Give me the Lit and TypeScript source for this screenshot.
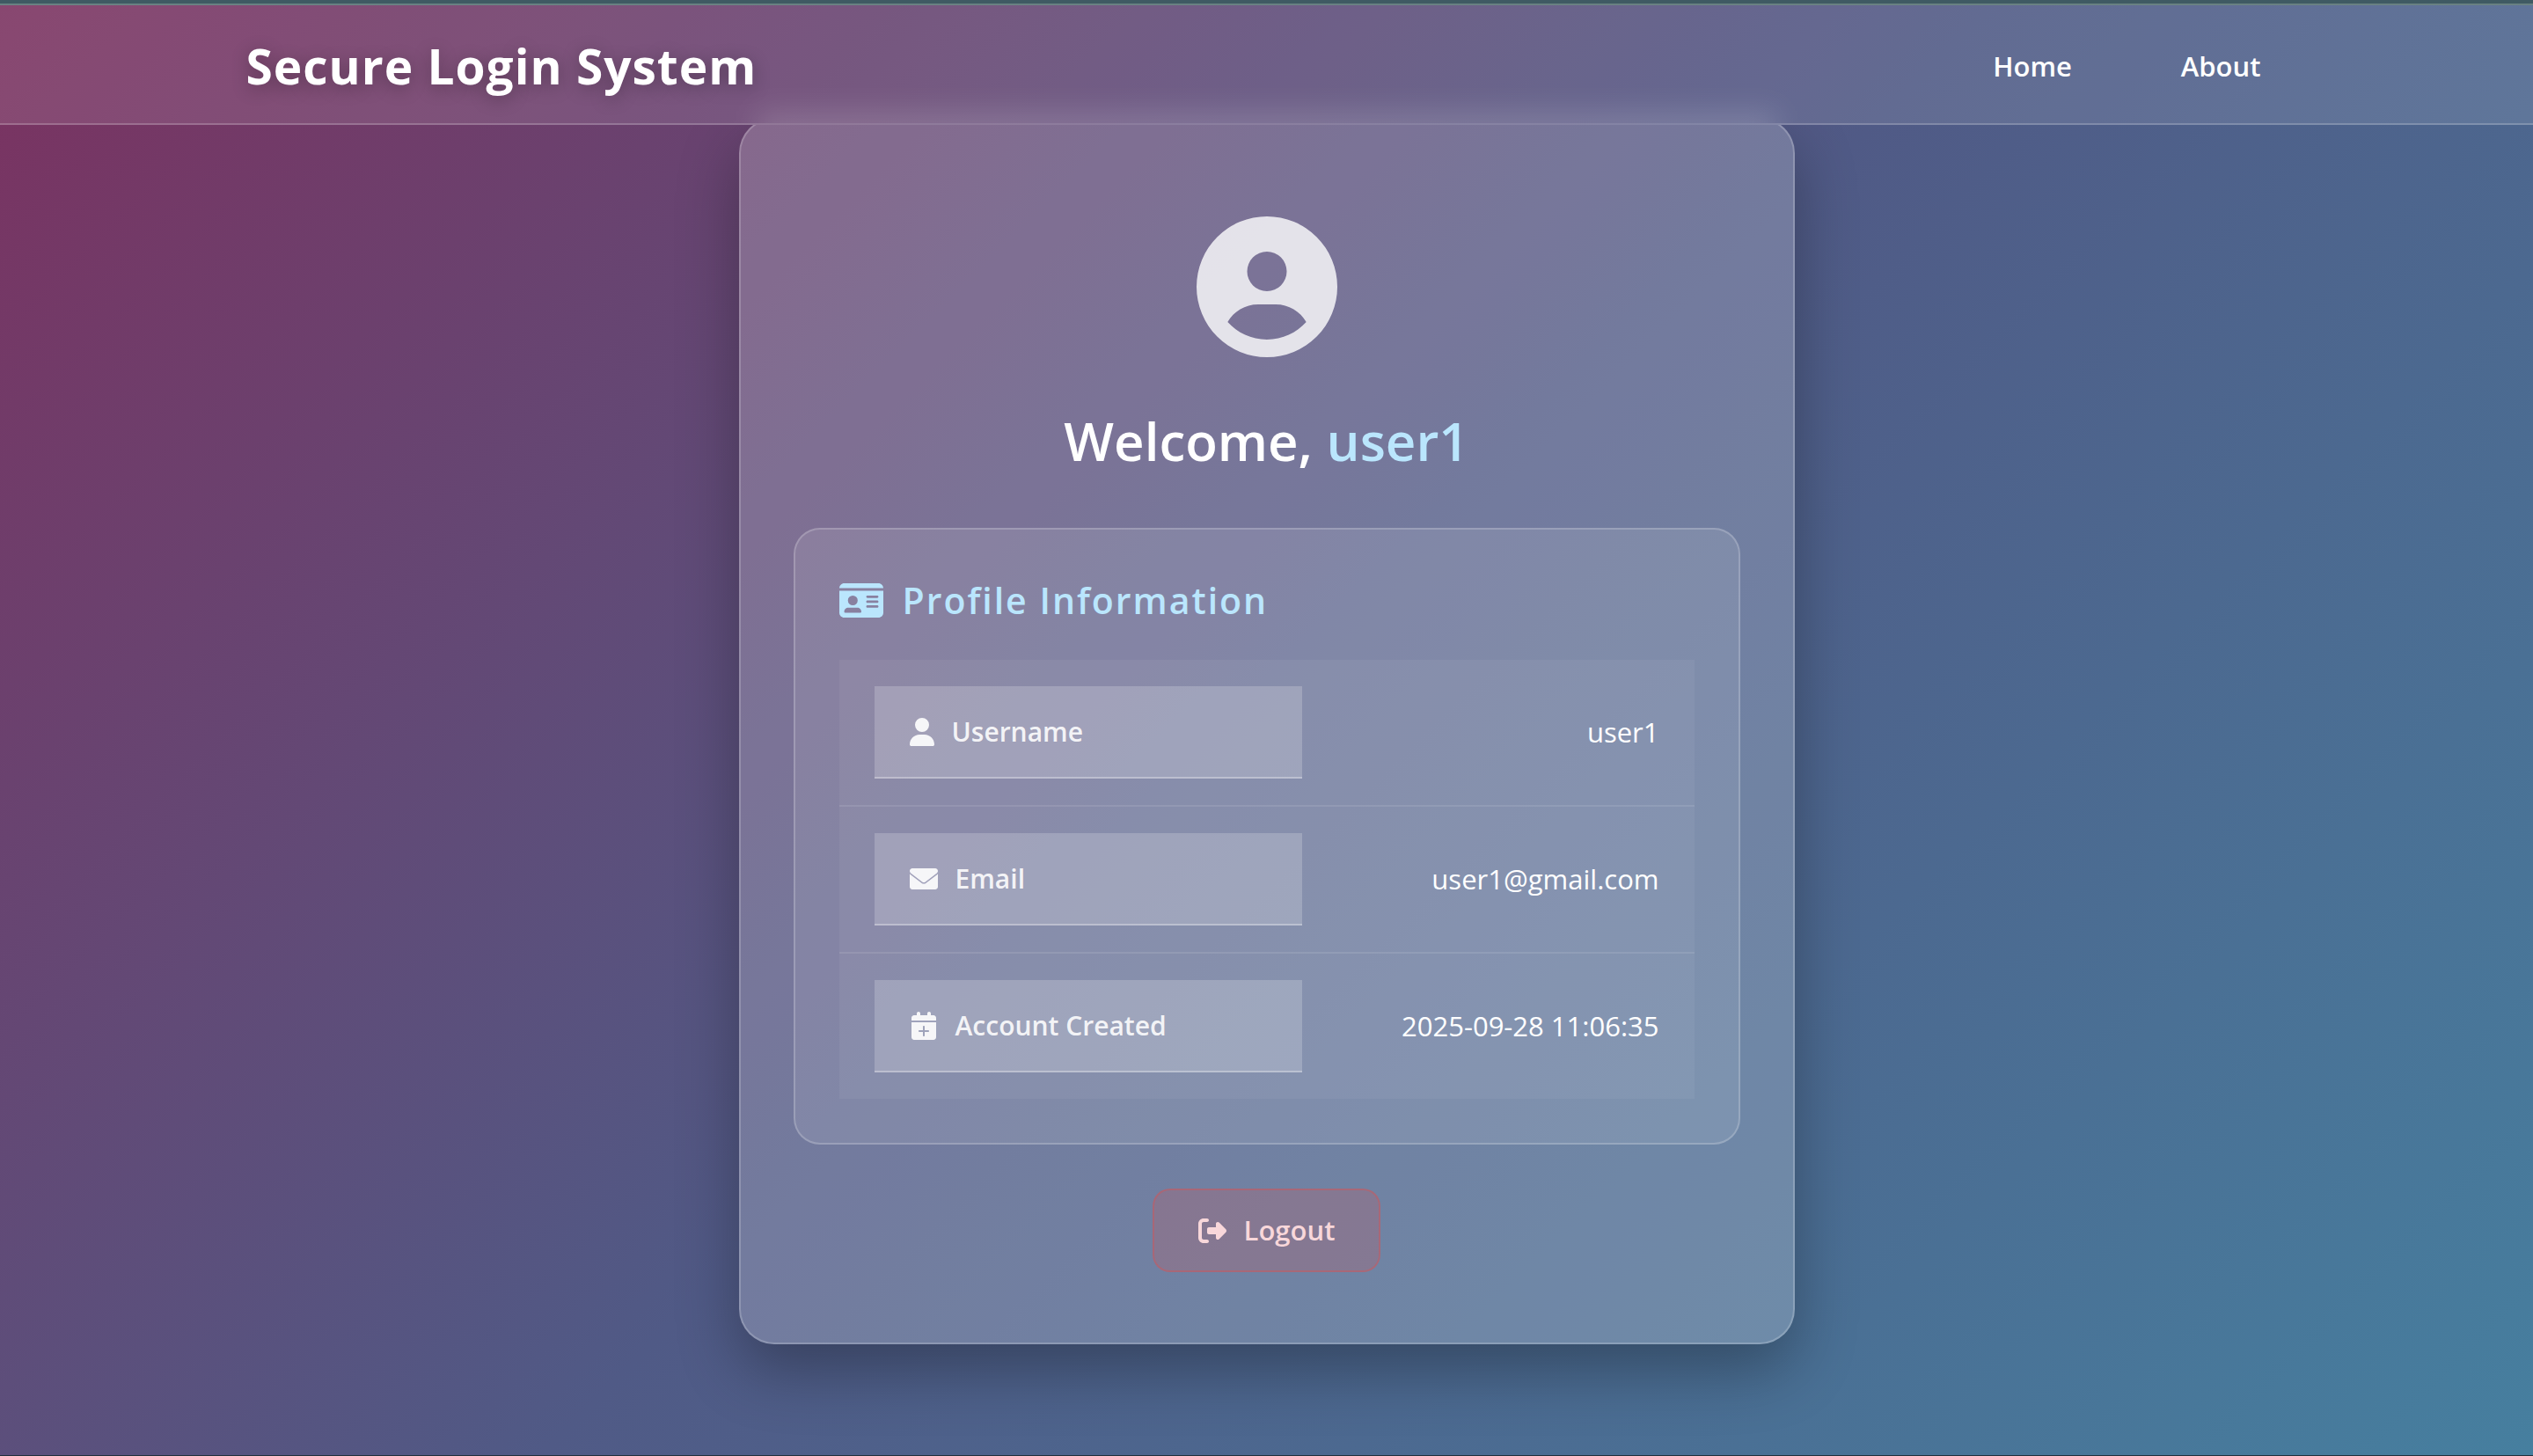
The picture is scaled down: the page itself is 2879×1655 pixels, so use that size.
import { LitElement, html, css, svg } from "lit";
import { customElement } from "lit/decorators.js";

const icons = {
  account: {
    box: "0 0 512 512",
    d: "M399 384.2C376.9 345.8 335.4 320 288 320l-64 0c-47.4 0-88.9 25.8-111 64.2c35.2 39.2 86.2 63.8 143 63.8s107.8-24.7 143-63.8zM0 256a256 256 0 1 1 512 0A256 256 0 1 1 0 256zm256 16a72 72 0 1 0 0-144 72 72 0 1 0 0 144z",
  },
  idCard: {
    box: "0 0 576 512",
    d: "M0 96l576 0c0-35.3-28.7-64-64-64L64 32C28.7 32 0 60.7 0 96zm0 32L0 416c0 35.3 28.7 64 64 64l448 0c35.3 0 64-28.7 64-64l0-288L0 128zM64 405.3c0-29.5 23.9-53.3 53.3-53.3l117.3 0c29.5 0 53.3 23.9 53.3 53.3c0 5.9-4.8 10.7-10.7 10.7L74.7 416c-5.9 0-10.7-4.8-10.7-10.7zM176 192a64 64 0 1 1 0 128 64 64 0 1 1 0-128zm176 16c0-8.8 7.2-16 16-16l128 0c8.8 0 16 7.2 16 16s-7.2 16-16 16l-128 0c-8.8 0-16-7.2-16-16zm0 64c0-8.8 7.2-16 16-16l128 0c8.8 0 16 7.2 16 16s-7.2 16-16 16l-128 0c-8.8 0-16-7.2-16-16zm0 64c0-8.8 7.2-16 16-16l128 0c8.8 0 16 7.2 16 16s-7.2 16-16 16l-128 0c-8.8 0-16-7.2-16-16z",
  },
  user: {
    box: "0 0 448 512",
    d: "M224 256A128 128 0 1 0 224 0a128 128 0 1 0 0 256zm-45.7 48C79.8 304 0 383.8 0 482.3C0 498.7 13.3 512 29.7 512H418.3c16.4 0 29.7-13.3 29.7-29.7C448 383.8 368.2 304 269.7 304H178.3z",
  },
  envelope: {
    box: "0 0 512 512",
    d: "M48 64C21.5 64 0 85.5 0 112c0 15.1 7.1 29.3 19.2 38.4L228 311c16.6 12.6 39.4 12.6 56 0L492.8 150.4c12.1-9.1 19.2-23.3 19.2-38.4c0-26.5-21.5-48-48-48H48zM0 164V400c0 26.5 21.5 48 48 48H464c26.5 0 48-21.5 48-48V164c-3 4-6 8-10 11L296 331c-23.7 18-56.3 18-80 0L10 175c-4-3-7-7-10-11z",
  },
  calendar: {
    box: "-32 0 512 512",
    d: "M96 32V64H48C21.5 64 0 85.5 0 112v48H448V112c0-26.5-21.5-48-48-48H352V32c0-17.7-14.3-32-32-32s-32 14.3-32 32V64H160V32c0-17.7-14.3-32-32-32S96 14.3 96 32zM448 192H0V464c0 26.5 21.5 48 48 48H400c26.5 0 48-21.5 48-48V192zM224 256c9 0 16 7 16 16v64h64c9 0 16 7 16 16s-7 16-16 16H240v64c0 9-7 16-16 16s-16-7-16-16V368H144c-9 0-16-7-16-16s7-16 16-16h64V272c0-9 7-16 16-16z",
  },
  logout: {
    box: "0 0 512 512",
    d: "M377.9 105.9L500.7 228.7c7.2 7.2 11.3 17.1 11.3 27.3s-4.1 20.1-11.3 27.3L377.9 406.1c-6.4 6.4-15 9.9-24 9.9c-18.7 0-33.9-15.2-33.9-33.9l0-62.1-128 0c-17.7 0-32-14.3-32-32l0-64c0-17.7 14.3-32 32-32l128 0 0-62.1c0-18.7 15.2-33.9 33.9-33.9c9 0 17.6 3.6 24 9.9zM160 96L96 96c-17.7 0-32 14.3-32 32l0 256c0 17.7 14.3 32 32 32l64 0c17.7 0 32 14.3 32 32s-14.3 32-32 32l-64 0c-53 0-96-43-96-96L0 128C0 75 43 32 96 32l64 0c17.7 0 32 14.3 32 32s-14.3 32-32 32z",
  },
};

type IconName = keyof typeof icons;

const icon = (name: IconName) => html`
  <svg class="icon icon-${name}" viewBox=${icons[name].box} aria-hidden="true">
    ${svg`<path d=${icons[name].d}></path>`}
  </svg>
`;

const fields: { icon: IconName; label: string; value: string }[] = [
  { icon: "user", label: "Username", value: "user1" },
  { icon: "envelope", label: "Email", value: "user1@gmail.com" },
  { icon: "calendar", label: "Account Created", value: "2025-09-28 11:06:35" },
];

@customElement("app-root")
export class AppRoot extends LitElement {
  static styles = css`
    :host {
      --backdrop: linear-gradient(135deg, #7b3260 0%, #505a86 50%, #467f9f 100%);
      display: block;
      color: #fff;
      font-family: "Segoe UI", "Open Sans", "Noto Sans", sans-serif;
      font-size: 31px;
      line-height: 43px;
    }
    * {
      box-sizing: border-box;
    }
    .page {
      display: flex;
      flex-direction: column;
      min-height: 100vh;
      border-bottom: 1px solid #22303c;
      background: var(--backdrop) fixed;
    }
    .topline {
      height: 6px;
      background: #3f5a63;
      border-bottom: 2px solid #698182;
    }
    .header {
      position: relative;
      z-index: 1;
      overflow: hidden;
      border-bottom: 2px solid rgba(255, 255, 255, 0.2);
      background:
        linear-gradient(rgba(255, 255, 255, 0.1), rgba(255, 255, 255, 0.1)),
        var(--backdrop) fixed;
    }
    /* Soft glow where the card slides under the frosted header */
    .header::before {
      content: "";
      position: absolute;
      bottom: -60px;
      left: calc(50% - 580px);
      width: 1160px;
      height: 74px;
      background: rgba(255, 255, 255, 0.14);
      filter: blur(16px);
    }
    .bar {
      position: relative;
      display: flex;
      align-items: center;
      justify-content: space-between;
      max-width: 2400px;
      min-height: 134px;
      margin: 0 auto;
      padding: 4px 40px 0;
    }
    .brand {
      margin: 0;
      font-size: 55px;
      line-height: 76px;
      font-weight: 700;
      letter-spacing: 1px;
      text-shadow: 0 4px 20px rgba(0, 0, 0, 0.3);
    }
    .nav {
      display: flex;
      gap: 64px;
    }
    .nav-link {
      padding: 16px 30px;
      color: inherit;
      font-weight: 600;
      text-decoration: none;
    }
    .main {
      display: flex;
      flex: 1;
      align-items: center;
      justify-content: center;
      margin-top: -142px;
      padding-top: 8px;
    }
    .card {
      display: flex;
      flex-direction: column;
      align-items: center;
      width: 1200px;
      max-width: 100%;
      padding: 110px 60px 80px;
      border: 2px solid rgba(255, 255, 255, 0.2);
      border-radius: 40px;
      background: rgba(255, 255, 255, 0.2);
      box-shadow: 0 30px 70px rgba(0, 0, 0, 0.3);
    }
    .icon {
      display: block;
      flex: none;
      width: 32px;
      height: 32px;
      fill: currentColor;
    }
    .icon-account {
      width: 160px;
      height: 160px;
      opacity: 0.8;
    }
    .icon-idCard {
      width: 50px;
      height: 45px;
    }
    .icon-user {
      width: 28px;
    }
    .welcome {
      margin: 52px 0 56px;
      font-size: 60px;
      line-height: 86px;
      font-weight: 600;
    }
    .name {
      color: #bae6fd;
    }
    .panel {
      align-self: stretch;
      padding: 50px;
      border: 2px solid rgba(255, 255, 255, 0.2);
      border-radius: 30px;
      background: rgba(255, 255, 255, 0.1);
    }
    .panel-title {
      display: flex;
      align-items: center;
      gap: 22px;
      margin: 0 0 38px;
      color: #bae6fd;
      font-size: 41px;
      line-height: 60px;
      font-weight: 600;
      letter-spacing: 2px;
    }
    .fields {
      display: block;
      width: 100%;
      background: rgba(255, 255, 255, 0.05);
    }
    .rows {
      display: block;
    }
    .row {
      display: grid;
      grid-template-columns: calc(50% + 40px) 1fr;
      align-items: center;
      padding: 30px 40px;
      border-bottom: 2px solid rgba(255, 255, 255, 0.1);
    }
    .row:last-child {
      border-bottom: 0;
    }
    .label {
      display: flex;
      align-items: center;
      gap: 20px;
      padding: 30px 40px;
      border-bottom: 2px solid rgba(255, 255, 255, 0.3);
      background: rgba(255, 255, 255, 0.2);
      color: rgba(255, 255, 255, 0.9);
      font-size: 30px;
      font-weight: 600;
      text-align: left;
    }
    .value {
      padding: 0;
      text-align: right;
    }
    .logout {
      display: flex;
      align-items: center;
      gap: 20px;
      margin-top: 50px;
      padding: 24px 50px;
      border: 2px solid rgba(220, 80, 80, 0.4);
      border-radius: 20px;
      background: rgba(220, 80, 80, 0.2);
      color: #f8d7da;
      font: inherit;
      font-weight: 600;
    }
  `;

  render() {
    return html`
      <div class="page">
        <div class="topline"></div>
        <header class="header">
          <div class="bar">
            <h1 class="brand">Secure Login System</h1>
            <nav class="nav">
              <a class="nav-link" href="#home">Home</a>
              <a class="nav-link" href="#about">About</a>
            </nav>
          </div>
        </header>
        <main class="main">
          <section class="card">
            ${icon("account")}
            <h2 class="welcome">Welcome, <span class="name">user1</span></h2>
            <section class="panel">
              <h3 class="panel-title">${icon("idCard")}<span>Profile Information</span></h3>
              <table class="fields">
                <tbody class="rows">
                  ${fields.map(
                    (field) => html`
                      <tr class="row">
                        <th class="label" scope="row">${icon(field.icon)}<span>${field.label}</span></th>
                        <td class="value">${field.value}</td>
                      </tr>
                    `
                  )}
                </tbody>
              </table>
            </section>
            <button class="logout" type="button">${icon("logout")}<span>Logout</span></button>
          </section>
        </main>
      </div>
    `;
  }
}
